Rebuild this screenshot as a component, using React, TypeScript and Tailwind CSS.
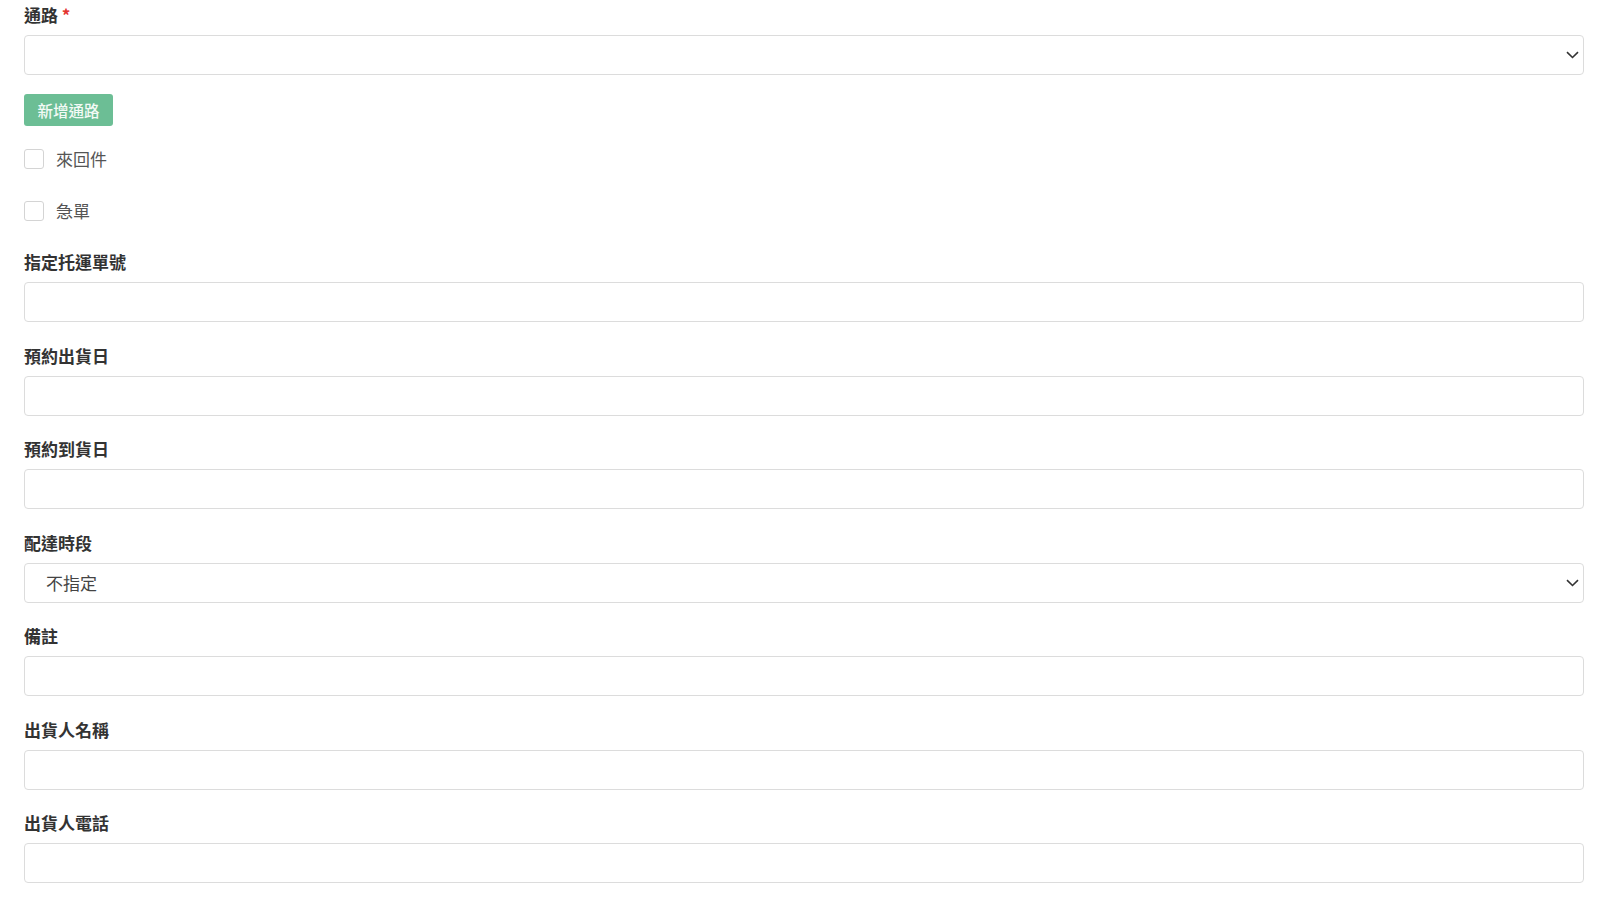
import React from "react";

const font = { fontFamily: '"Noto Sans CJK TC", "Noto Sans", sans-serif' };

function Chevron() {
  return (
    <svg
      className="pointer-events-none absolute right-[5px] top-1/2 -translate-y-1/2"
      width="13"
      height="8"
      viewBox="0 0 13 8"
      fill="none"
    >
      <path d="M1 1.2L6.5 6.5L12 1.2" stroke="#333" strokeWidth="1.6" />
    </svg>
  );
}

function Field({ label }: { label: string }) {
  return (
    <div className="mb-[21.5px]">
      <div className="h-6 mb-2 text-[17px] leading-6 font-bold text-[#333]">{label}</div>
      <input
        type="text"
        className="block w-full h-10 border border-[#dcdcdc] rounded-[4px] bg-white px-3 outline-none"
      />
    </div>
  );
}

function Check({ label }: { label: string }) {
  return (
    <label className="flex items-center h-[52px] gap-3 cursor-pointer">
      <span className="w-5 h-5 border border-[#d4d4d4] rounded-[3px] bg-white shrink-0" />
      <span className="text-[17px] text-[#555] leading-6">{label}</span>
    </label>
  );
}

export default function App() {
  return (
    <div className="min-h-[898px] bg-white pl-6 pr-4 pt-[3px]" style={font}>
      <div className="h-6 mb-2 text-[17px] leading-6 font-bold text-[#333]">
        通路 <span className="text-[#e3342f]">*</span>
      </div>
      <div className="relative">
        <select className="block w-full h-10 border border-[#dcdcdc] rounded-[4px] bg-white pl-[21px] appearance-none outline-none text-[17px] text-[#444]">
          <option></option>
        </select>
        <Chevron />
      </div>

      <button
        type="button"
        className="block mt-[19px] h-8 px-[13.5px] rounded-[3px] bg-[#6cbe95] text-[15.5px] leading-8 font-medium text-[#f3faf6]"
      >
        新增通路
      </button>

      <div className="pt-[7px]">
        <Check label="來回件" />
        <Check label="急單" />
      </div>

      <div className="mt-[13px]">
        <Field label="指定托運單號" />
        <Field label="預約出貨日" />
        <Field label="預約到貨日" />
        <div className="mb-[21.5px]">
          <div className="h-6 mb-2 text-[17px] leading-6 font-bold text-[#333]">配達時段</div>
          <div className="relative">
            <select className="block w-full h-10 border border-[#dcdcdc] rounded-[4px] bg-white pl-[21px] appearance-none outline-none text-[17px] text-[#444]">
              <option>不指定</option>
              <option>上午</option>
              <option>下午</option>
            </select>
            <Chevron />
          </div>
        </div>
        <Field label="備註" />
        <Field label="出貨人名稱" />
        <Field label="出貨人電話" />
      </div>
    </div>
  );
}
